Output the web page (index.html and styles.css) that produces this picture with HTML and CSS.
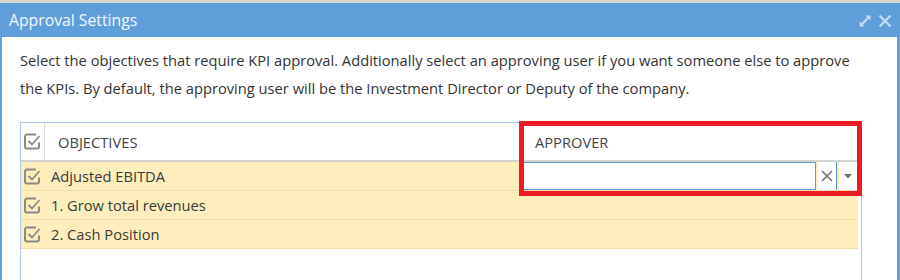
FILE: index.html
```html
<!DOCTYPE html>
<html>
<head>
<meta charset="utf-8">
<link rel="stylesheet" href="styles.css">
</head>
<body>
<div class="topstrip"></div>
<div class="dialog">
  <div class="titlebar">
    <span class="title">Approval Settings</span>
    <div class="tools">
      <svg class="tool" width="14" height="14" viewBox="0 0 14 14"><path d="M3 11L11 3" stroke="#c3dcf3" stroke-width="2.2" fill="none"/><path d="M7.5 1.5H12.5V6.5Z" fill="#c3dcf3"/><path d="M1.5 7.5V12.5H6.5Z" fill="#c3dcf3"/></svg>
      <svg class="tool" width="14" height="14" viewBox="0 0 14 14"><path d="M1.5 1.5L12.5 12.5M12.5 1.5L1.5 12.5" stroke="#c3dcf3" stroke-width="2.2" fill="none"/></svg>
    </div>
  </div>
  <div class="content">
    <p class="intro">Select the objectives that require KPI approval. Additionally select an approving user if you want someone else to approve the KPIs. By default, the approving user will be the Investment Director or Deputy of the company.</p>
    <div class="grid">
      <div class="head">
        <div class="hcheck"><svg class="chk" width="17" height="17" viewBox="0 0 17 17"><path d="M15 9.5v4a2 2 0 0 1-2 2H3a2 2 0 0 1-2-2V3.5a2 2 0 0 1 2-2h9" fill="none" stroke="#8a8a8a" stroke-width="2"/><path d="M4.5 8l3.5 3.5L15.5 3" fill="none" stroke="#8a8a8a" stroke-width="1.8"/></svg></div>
        <div class="hobj">OBJECTIVES</div>
        <div class="happ">APPROVER</div>
      </div>
      <div class="row">
        <div class="rcheck"><svg class="chk" width="17" height="17" viewBox="0 0 17 17"><path d="M15 9.5v4a2 2 0 0 1-2 2H3a2 2 0 0 1-2-2V3.5a2 2 0 0 1 2-2h9" fill="none" stroke="#8a8a8a" stroke-width="2"/><path d="M4.5 8l3.5 3.5L15.5 3" fill="none" stroke="#8a8a8a" stroke-width="1.8"/></svg></div>
        <div class="robj">Adjusted EBITDA</div>
        <div class="rapp">
          <div class="combo">
            <div class="cinput"></div>
            <div class="cbtn"><svg width="12" height="12" viewBox="0 0 12 12"><path d="M1 1L11 11M11 1L1 11" stroke="#707070" stroke-width="1.6" fill="none"/></svg></div>
            <div class="cbtn"><svg width="8" height="5" viewBox="0 0 8 5"><path d="M0 0H8L4 4.5Z" fill="#707070"/></svg></div>
          </div>
        </div>
      </div>
      <div class="row">
        <div class="rcheck"><svg class="chk" width="17" height="17" viewBox="0 0 17 17"><path d="M15 9.5v4a2 2 0 0 1-2 2H3a2 2 0 0 1-2-2V3.5a2 2 0 0 1 2-2h9" fill="none" stroke="#8a8a8a" stroke-width="2"/><path d="M4.5 8l3.5 3.5L15.5 3" fill="none" stroke="#8a8a8a" stroke-width="1.8"/></svg></div>
        <div class="robj">1. Grow total revenues</div>
        <div class="rapp"></div>
      </div>
      <div class="row">
        <div class="rcheck"><svg class="chk" width="17" height="17" viewBox="0 0 17 17"><path d="M15 9.5v4a2 2 0 0 1-2 2H3a2 2 0 0 1-2-2V3.5a2 2 0 0 1 2-2h9" fill="none" stroke="#8a8a8a" stroke-width="2"/><path d="M4.5 8l3.5 3.5L15.5 3" fill="none" stroke="#8a8a8a" stroke-width="1.8"/></svg></div>
        <div class="robj">2. Cash Position</div>
        <div class="rapp"></div>
      </div>
      <div class="empty"></div>
    </div>
  </div>
</div>
<div class="highlight"></div>
</body>
</html>
```
FILE: styles.css
```css
html, body {
  margin: 0;
  padding: 0;
  background: #ffffff;
  font-family: "Open Sans", "DejaVu Sans", sans-serif;
  overflow: hidden;
}
.topstrip {
  height: 3px;
  background: #d6d6d6;
}
.dialog {
  border-left: 2px solid #5e9fdb;
  border-right: 3px solid #5e9fdb;
  background: #ffffff;
}
.titlebar {
  height: 34px;
  margin-left: -2px;
  margin-right: -3px;
  background: #5e9fdb;
  display: flex;
  align-items: center;
  justify-content: space-between;
  padding: 0 8px 0 9px;
}
.title {
  color: #f2f7fc;
  font-size: 15.75px;
  line-height: 20px;
}
.tools {
  display: flex;
  gap: 6px;
  align-items: center;
  padding-top: 2px;
}
.tool {
  display: block;
}
.content {
  padding: 9px 35px 0 18px;
}
.intro {
  margin: 0;
  font-size: 14.7px;
  line-height: 28px;
  color: #333333;
}
.grid {
  margin-top: 20px;
  border-left: 1px solid #a9c8ea;
  border-top: 1px solid #a9c8ea;
  border-right: 1px solid #a9c8ea;
  padding-right: 3px;
}
.head {
  display: flex;
  height: 37px;
  border-bottom: 2px solid #d2d2d2;
  color: #444444;
  font-size: 14.7px;
}
.hcheck {
  border-right: 1px solid #dcdcdc;
  display: flex;
  align-items: center;
  padding-left: 3px;
  box-sizing: border-box;
  width: 24px;
}
.hobj {
  width: 477px;
  display: flex;
  align-items: center;
  padding-left: 13px;
  box-sizing: border-box;
}
.happ {
  flex: 1;
  display: flex;
  align-items: center;
  padding-left: 13px;
}
.chk {
  display: block;
}
.row {
  display: flex;
  height: 28px;
  background: #fdeebb;
  border-bottom: 1px solid #f0dfa6;
  font-size: 14.7px;
  color: #3a3a3a;
}
.rcheck {
  width: 24px;
  display: flex;
  align-items: center;
  padding-left: 3px;
  box-sizing: border-box;
}
.robj {
  width: 477px;
  display: flex;
  align-items: center;
  padding-left: 6px;
  box-sizing: border-box;
}
.rapp {
  flex: 1;
  display: flex;
  align-items: flex-start;
}
.combo {
  display: flex;
  width: 100%;
  height: 28px;
  gap: 2px;
}
.cinput {
  flex: 1;
  background: #ffffff;
  border: 1px solid #5b9bd5;
}
.cbtn {
  width: 18px;
  background: #ffffff;
  border-right: 1px solid #5b9bd5;
  display: flex;
  align-items: center;
  justify-content: center;
}
.empty {
  height: 40px;
}
.highlight {
  position: absolute;
  left: 519px;
  top: 121px;
  width: 333px;
  height: 65px;
  border: 5px solid #ed1c24;
}
```
